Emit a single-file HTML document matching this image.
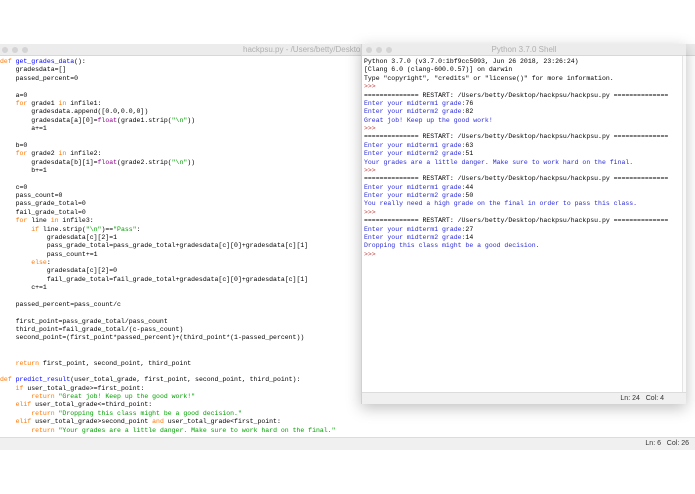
<!DOCTYPE html>
<html><head><meta charset="utf-8"><style>
*{margin:0;padding:0;box-sizing:border-box}
body{width:695px;height:494px;background:#fff;position:relative;overflow:hidden;font-family:"Liberation Sans",sans-serif}
.win{position:absolute;background:#fff}
.tb{position:absolute;left:0;right:0;top:0;height:12px;background:#ececec;border-bottom:1px solid #d8d8d8;font-size:8px;color:#b0b0b0;text-align:center;line-height:12px}
.dot{position:absolute;top:3px;width:6px;height:6px;border-radius:50%;background:#d4d4d4}
pre{position:absolute;font-family:"Liberation Mono",monospace;white-space:pre;color:#000}
.k{color:#ff7700}.d{color:#0000ff}.s{color:#00a000}.b{color:#900090}.o{color:#2b2bd6}.p{color:#c04040}
.sb{position:absolute;left:0;right:0;height:12px;background:#f0f0f0;border-top:1px solid #dcdcdc;font-size:7px;color:#333;line-height:11px}
</style></head><body>
<div class="win" style="left:0;top:44px;width:695px;height:406px">
<div class="tb"><div class="dot" style="left:2px"></div><div class="dot" style="left:12px"></div><div class="dot" style="left:22px"></div><span style="position:absolute;left:243px">hackpsu.py - /Users/betty/Desktop/hackpsu/hackpsu.py (3.7.0)</span></div>
<pre style="left:0;top:14px;font-size:6.5px;line-height:8.37px"><span class="k">def</span> <span class="d">get_grades_data</span>():
    gradesdata=[]
    passed_percent=0

    a=0
    <span class="k">for</span> grade1 <span class="k">in</span> infile1:
        gradesdata.append([0.0,0.0,0])
        gradesdata[a][0]=<span class="b">float</span>(grade1.strip(<span class="s">"\n"</span>))
        a+=1

    b=0
    <span class="k">for</span> grade2 <span class="k">in</span> infile2:
        gradesdata[b][1]=<span class="b">float</span>(grade2.strip(<span class="s">"\n"</span>))
        b+=1

    c=0
    pass_count=0
    pass_grade_total=0
    fail_grade_total=0
    <span class="k">for</span> line <span class="k">in</span> infile3:
        <span class="k">if</span> line.strip(<span class="s">"\n"</span>)==<span class="s">"Pass"</span>:
            gradesdata[c][2]=1
            pass_grade_total=pass_grade_total+gradesdata[c][0]+gradesdata[c][1]
            pass_count+=1
        <span class="k">else</span>:
            gradesdata[c][2]=0
            fail_grade_total=fail_grade_total+gradesdata[c][0]+gradesdata[c][1]
        c+=1

    passed_percent=pass_count/c

    first_point=pass_grade_total/pass_count
    third_point=fail_grade_total/(c-pass_count)
    second_point=(first_point*passed_percent)+(third_point*(1-passed_percent))


    <span class="k">return</span> first_point, second_point, third_point

<span class="k">def</span> <span class="d">predict_result</span>(user_total_grade, first_point, second_point, third_point):
    <span class="k">if</span> user_total_grade&gt;=first_point:
        <span class="k">return</span> <span class="s">"Great job! Keep up the good work!"</span>
    <span class="k">elif</span> user_total_grade&lt;=third_point:
        <span class="k">return</span> <span class="s">"Dropping this class might be a good decision."</span>
    <span class="k">elif</span> user_total_grade&gt;second_point <span class="k">and</span> user_total_grade&lt;first_point:
        <span class="k">return</span> <span class="s">"Your grades are a little danger. Make sure to work hard on the final."</span></pre>
<div class="sb" style="top:393px;height:13px"><span style="position:absolute;right:6px">Ln: 6&nbsp;&nbsp;&nbsp;Col: 26</span></div>
</div>
<div class="win" style="left:361px;top:44px;width:325px;height:360px;box-shadow:0 4px 14px rgba(0,0,0,.25);border-left:1px solid #d0d0d0">
<div class="tb">Python 3.7.0 Shell<div class="dot" style="left:4px"></div><div class="dot" style="left:14px"></div><div class="dot" style="left:24px"></div></div>
<div style="position:absolute;right:0;top:12px;width:4px;height:336px;border-left:1px solid #e4e4e4;background:#fafafa"></div>
<pre style="left:2px;top:14px;font-size:6.5px;line-height:8.37px">Python 3.7.0 (v3.7.0:1bf9cc5093, Jun 26 2018, 23:26:24)
[Clang 6.0 (clang-600.0.57)] on darwin
Type "copyright", "credits" or "license()" for more information.
<span class="p">&gt;&gt;&gt;</span> 
============== RESTART: /Users/betty/Desktop/hackpsu/hackpsu.py ==============
<span class="o">Enter your midterm1 grade:</span>76
<span class="o">Enter your midterm2 grade:</span>82
<span class="o">Great job! Keep up the good work!</span>
<span class="p">&gt;&gt;&gt;</span> 
============== RESTART: /Users/betty/Desktop/hackpsu/hackpsu.py ==============
<span class="o">Enter your midterm1 grade:</span>63
<span class="o">Enter your midterm2 grade:</span>51
<span class="o">Your grades are a little danger. Make sure to work hard on the final.</span>
<span class="p">&gt;&gt;&gt;</span> 
============== RESTART: /Users/betty/Desktop/hackpsu/hackpsu.py ==============
<span class="o">Enter your midterm1 grade:</span>44
<span class="o">Enter your midterm2 grade:</span>50
<span class="o">You really need a high grade on the final in order to pass this class.</span>
<span class="p">&gt;&gt;&gt;</span> 
============== RESTART: /Users/betty/Desktop/hackpsu/hackpsu.py ==============
<span class="o">Enter your midterm1 grade:</span>27
<span class="o">Enter your midterm2 grade:</span>14
<span class="o">Dropping this class might be a good decision.</span>
<span class="p">&gt;&gt;&gt;</span> </pre>
<div class="sb" style="top:348px"><span style="position:absolute;right:22px">Ln: 24&nbsp;&nbsp;&nbsp;Col: 4</span></div>
</div>
</body></html>
